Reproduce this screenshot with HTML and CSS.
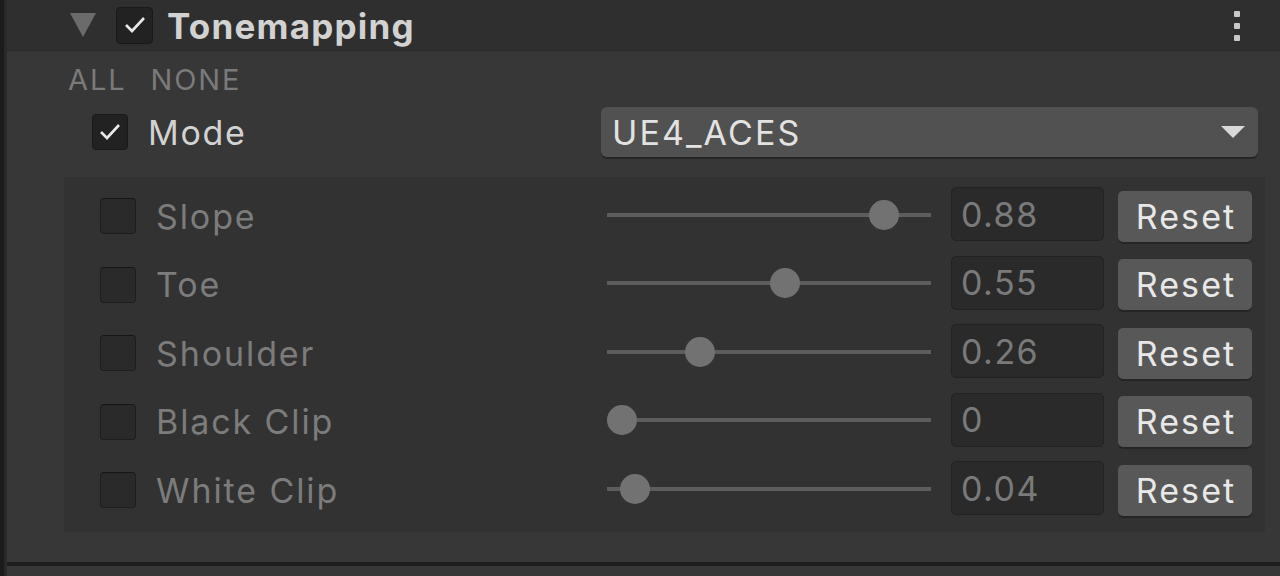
FILE: index.html
```html
<!DOCTYPE html>
<html>
<head>
<meta charset="utf-8">
<link rel="stylesheet" href="styles.css">
</head>
<body>
<div class="inspector">
  <div class="edge"></div>
  <div class="panel">
    <div class="header">
      <svg class="foldout" width="26" height="24" viewBox="0 0 26 24"><polygon points="0,0 26,0 13,24" fill="#6b6b6b"/></svg>
      <span class="check on big"><svg width="24" height="20" viewBox="0 0 24 20"><polyline points="3,10 9,16 21,3" fill="none" stroke="#e8e8e8" stroke-width="2.6"/></svg></span>
      <span class="title">Tonemapping</span>
      <span class="kebab"><i></i><i></i><i></i></span>
    </div>
    <div class="body">
      <div class="toggles"><span>ALL</span><span>NONE</span></div>
      <div class="mode-row">
        <span class="check on"><svg width="24" height="20" viewBox="0 0 24 20"><polyline points="3,10 9,16 21,3" fill="none" stroke="#e8e8e8" stroke-width="2.6"/></svg></span>
        <span class="mode-label">Mode</span>
        <div class="dropdown"><span>UE4_ACES</span><svg width="24" height="12" viewBox="0 0 24 12"><polygon points="0,0 24,0 12,12" fill="#d8d8d8"/></svg></div>
      </div>
      <div class="group">
        <div class="row">
          <span class="check"></span><span class="label">Slope</span>
          <div class="slider"><div class="track"></div><div class="thumb" style="left:262px"></div></div>
          <div class="field">0.88</div><div class="reset">Reset</div>
        </div>
        <div class="row">
          <span class="check"></span><span class="label">Toe</span>
          <div class="slider"><div class="track"></div><div class="thumb" style="left:163px"></div></div>
          <div class="field">0.55</div><div class="reset">Reset</div>
        </div>
        <div class="row">
          <span class="check"></span><span class="label">Shoulder</span>
          <div class="slider"><div class="track"></div><div class="thumb" style="left:78px"></div></div>
          <div class="field">0.26</div><div class="reset">Reset</div>
        </div>
        <div class="row">
          <span class="check"></span><span class="label">Black Clip</span>
          <div class="slider"><div class="track"></div><div class="thumb" style="left:0px"></div></div>
          <div class="field">0</div><div class="reset">Reset</div>
        </div>
        <div class="row">
          <span class="check"></span><span class="label">White Clip</span>
          <div class="slider"><div class="track"></div><div class="thumb" style="left:13px"></div></div>
          <div class="field">0.04</div><div class="reset">Reset</div>
        </div>
      </div>
    </div>
    <div class="footer"></div>
  </div>
</div>
</body>
</html>
```
FILE: styles.css
```css
* { box-sizing: border-box; }
html, body { margin: 0; padding: 0; }
body {
  background: #373737;
  font-family: Inter, "Noto Sans", sans-serif;
  width: 1280px;
  height: 576px;
  overflow: hidden;
}
.inspector { display: flex; height: 576px; }
.edge {
  width: 7px;
  background: linear-gradient(to right, #1b1b1b 0, #1b1b1b 4px, #262626 4px, #2c2c2c 7px);
  flex: none;
}
.panel { flex: 1; display: flex; flex-direction: column; }
.header {
  height: 51px;
  background: #2f2f2f;
  display: flex;
  align-items: center;
  padding-left: 63px;
  padding-top: 3px;
  border-bottom: 1px solid #2a2a2a;
}
.foldout { margin-top: -4px; }
.check {
  width: 36px;
  height: 36px;
  border-radius: 4px;
  background: #2a2a2a;
  border: 1px solid #1e1e1e;
  border-top-color: #161616;
  display: inline-flex;
  align-items: center;
  justify-content: center;
  flex: none;
}
.check.on { background: #222222; border-color: #191919; }
.check.big { margin-left: 20px; width: 37px; height: 37px; margin-top: -3px; }
.title {
  margin-left: 14px;
  font-size: 35px;
  font-weight: 700;
  letter-spacing: 1.2px;
  color: #d2d2d2;
  flex: 1;
  margin-top: -2px;
}
.kebab {
  display: flex;
  flex-direction: column;
  gap: 6px;
  margin-right: 40px;
  margin-top: -2px;
}
.kebab i {
  display: block;
  width: 6px;
  height: 6px;
  background: #c8c8c8;
  border-radius: 1px;
}
.body { display: flex; flex-direction: column; }
.toggles {
  height: 56px;
  display: flex;
  align-items: center;
  gap: 24px;
  padding-left: 61px;
  font-size: 29px;
  color: #7a7a7a;
  letter-spacing: 1.9px;
}
.mode-row {
  height: 50px;
  display: flex;
  align-items: center;
  padding-left: 85px;
  padding-right: 22px;
}
.mode-label {
  margin-left: 20px;
  font-size: 34px;
  letter-spacing: 1.7px;
  color: #d2d2d2;
  flex: 1;
}
.dropdown {
  width: 657px;
  height: 50px;
  background: #515151;
  border-radius: 6px;
  box-shadow: 0 2px 0 #262626;
  display: flex;
  align-items: center;
  justify-content: space-between;
  padding: 0 13px 0 11px;
  font-size: 34px;
  letter-spacing: 2.1px;
  color: #e2e2e2;
}
.group {
  margin: 20px 15px 0 57px;
  background: #323232;
  padding: 5px 13px 7px 36px;
}
.row {
  height: 68.5px;
  display: flex;
  align-items: center;
}
.label {
  margin-left: 20px;
  flex: 1;
  font-size: 34px;
  letter-spacing: 1.9px;
  color: #7c7c7c;
}
.slider {
  position: relative;
  width: 324px;
  height: 30px;
  margin-top: -3px;
}
.track {
  position: absolute;
  left: 0;
  right: 0;
  top: 13px;
  height: 4px;
  background: #5d5d5d;
}
.thumb {
  position: absolute;
  top: 0;
  width: 30px;
  height: 30px;
  border-radius: 50%;
  background: #727272;
}
.field {
  margin-left: 20px;
  width: 153px;
  height: 54px;
  margin-top: -4px;
  background: #2a2a2a;
  border: 1px solid #222222;
  border-radius: 5px;
  padding-left: 9px;
  display: flex;
  align-items: center;
  font-size: 34px;
  letter-spacing: 1.5px;
  color: #7a7a7a;
}
.reset {
  margin-left: 14px;
  width: 134px;
  height: 51px;
  background: #585858;
  border-radius: 5px;
  box-shadow: 0 2px 0 #252525;
  display: flex;
  align-items: center;
  justify-content: center;
  font-size: 34px;
  letter-spacing: 2.1px;
  padding-left: 2px;
  color: #e8e8e8;
}
.footer {
  margin-top: 30px;
  height: 4px;
  background: #1e1e1e;
}
```
